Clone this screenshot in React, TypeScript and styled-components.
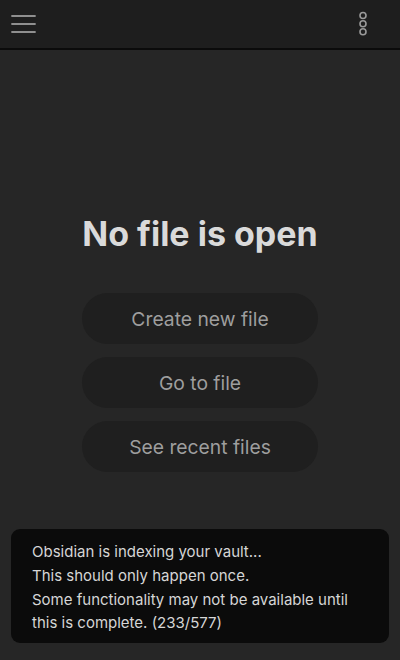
import React from "react";
import styled, { createGlobalStyle } from "styled-components";

const Global = createGlobalStyle`
  html, body { margin: 0; padding: 0; background: #262626; }
  body { font-family: Inter, "Noto Sans", sans-serif; -webkit-font-smoothing: antialiased; }
  * { box-sizing: border-box; }
`;

const Page = styled.div`
  width: 400px;
  height: 660px;
  background: #262626;
  display: flex;
  flex-direction: column;
  position: relative;
  overflow: hidden;
`;

const Header = styled.header`
  height: 50px;
  flex: none;
  background: #1e1e1e;
  border-bottom: 2px solid #0b0b0b;
  display: flex;
  align-items: center;
  justify-content: space-between;
  padding: 0 32px 0 11px;
`;

const IconButton = styled.button`
  background: none;
  border: none;
  padding: 0;
  display: flex;
  align-items: center;
  justify-content: center;
  color: #9a9a9a;
  cursor: pointer;
`;

const Main = styled.main`
  flex: 1;
  display: flex;
  flex-direction: column;
  align-items: center;
  padding-top: 164px;
`;

const Title = styled.h1`
  margin: 0;
  font-size: 34px;
  line-height: 40px;
  font-weight: 700;
  color: #dadada;
`;

const Actions = styled.div`
  margin-top: 39px;
  display: flex;
  flex-direction: column;
  gap: 13px;
  width: 236px;
`;

const Action = styled.button`
  height: 51px;
  border: none;
  border-radius: 26px;
  background: #1f1f1f;
  color: #9e9e9e;
  font-family: Inter, "Noto Sans", sans-serif;
  font-size: 19.3px;
  font-weight: 400;
  cursor: pointer;
`;

const Notice = styled.div`
  position: absolute;
  left: 11px;
  right: 11px;
  bottom: 17px;
  height: 114px;
  background: #0b0b0b;
  border-radius: 9px;
  padding: 11px 20px 0 21px;
  color: #d6d6d6;
  font-size: 15px;
  line-height: 23.8px;
`;

const Menu = () => (
  <svg width="25" height="20" viewBox="0 0 25 20">
    <g stroke="#8f8f8f" strokeWidth="1.8" strokeLinecap="round">
      <line x1="1" y1="2" x2="24" y2="2" />
      <line x1="1" y1="10" x2="24" y2="10" />
      <line x1="1" y1="18" x2="24" y2="18" />
    </g>
  </svg>
);

const Dots = () => (
  <svg width="10" height="26" viewBox="0 0 10 26">
    <g stroke="#9a9a9a" strokeWidth="1.6" fill="none">
      <circle cx="5" cy="4.5" r="3" />
      <circle cx="5" cy="12.7" r="3" />
      <circle cx="5" cy="20.8" r="3" />
    </g>
  </svg>
);

export default function App() {
  return (
    <Page>
      <Global />
      <Header>
        <IconButton aria-label="Menu"><Menu /></IconButton>
        <IconButton aria-label="More"><Dots /></IconButton>
      </Header>
      <Main>
        <Title>No file is open</Title>
        <Actions>
          <Action>Create new file</Action>
          <Action>Go to file</Action>
          <Action>See recent files</Action>
        </Actions>
      </Main>
      <Notice>
        Obsidian is indexing your vault...<br />
        This should only happen once.<br />
        Some functionality may not be available until<br />
        this is complete. (233/577)
      </Notice>
    </Page>
  );
}
